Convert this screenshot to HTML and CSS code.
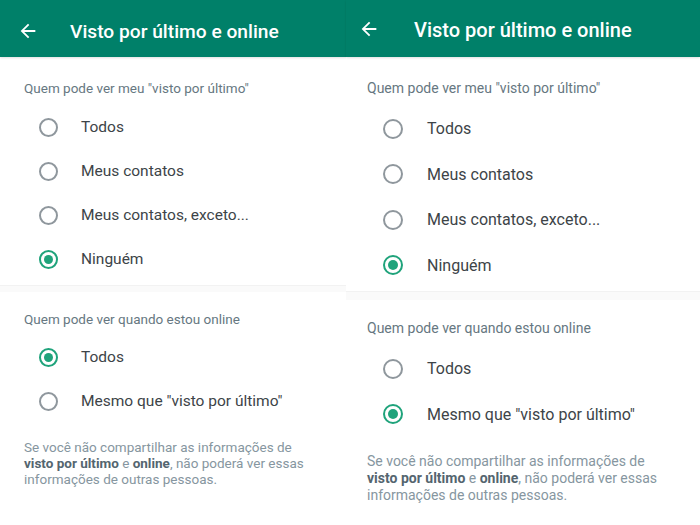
FILE: index.html
```html
<!DOCTYPE html>
<html lang="pt">
<head>
<meta charset="utf-8">
<link rel="stylesheet" href="styles.css">
</head>
<body>
<div class="page">
  <section class="panel left">
    <header class="bar">
      <svg class="back" viewBox="0 0 24 24"><path d="M20 11H7.83l5.59-5.59L12 4l-8 8 8 8 1.41-1.41L7.83 13H20v-2z" fill="#fff"/></svg>
      <h1 class="title">Visto por último e online</h1>
    </header>
    <div class="sub first">Quem pode ver meu "visto por último"</div>
    <div class="opt"><span class="radio"></span><span class="label">Todos</span></div>
    <div class="opt"><span class="radio"></span><span class="label">Meus contatos</span></div>
    <div class="opt"><span class="radio"></span><span class="label">Meus contatos, exceto...</span></div>
    <div class="opt"><span class="radio on"></span><span class="label">Ninguém</span></div>
    <div class="divider"></div>
    <div class="sub">Quem pode ver quando estou online</div>
    <div class="opt"><span class="radio on"></span><span class="label">Todos</span></div>
    <div class="opt"><span class="radio"></span><span class="label">Mesmo que "visto por último"</span></div>
    <div class="note">
      <span class="ln">Se você não compartilhar as informações de</span>
      <span class="ln"><b>visto por último</b> e <b>online</b><span>, não poderá ver essas</span></span>
      <span class="ln">informações de outras pessoas.</span>
    </div>
  </section>
  <section class="panel right">
    <header class="bar">
      <svg class="back" viewBox="0 0 24 24"><path d="M20 11H7.83l5.59-5.59L12 4l-8 8 8 8 1.41-1.41L7.83 13H20v-2z" fill="#fff"/></svg>
      <h1 class="title">Visto por último e online</h1>
    </header>
    <div class="sub first">Quem pode ver meu "visto por último"</div>
    <div class="opt"><span class="radio"></span><span class="label">Todos</span></div>
    <div class="opt"><span class="radio"></span><span class="label">Meus contatos</span></div>
    <div class="opt"><span class="radio"></span><span class="label">Meus contatos, exceto...</span></div>
    <div class="opt"><span class="radio on"></span><span class="label">Ninguém</span></div>
    <div class="divider"></div>
    <div class="sub">Quem pode ver quando estou online</div>
    <div class="opt"><span class="radio"></span><span class="label">Todos</span></div>
    <div class="opt"><span class="radio on"></span><span class="label">Mesmo que "visto por último"</span></div>
    <div class="note">
      <span class="ln">Se você não compartilhar as informações de</span>
      <span class="ln"><b>visto por último</b> e <b>online</b><span>, não poderá ver essas</span></span>
      <span class="ln">informações de outras pessoas.</span>
    </div>
  </section>
</div>
</body>
</html>
```
FILE: styles.css
```css
html, body {
  margin: 0;
  padding: 0;
  background: #fff;
}
body {
  font-family: Roboto, "Liberation Sans", sans-serif;
  width: 700px;
  height: 525px;
  overflow: hidden;
}
.page {
  display: flex;
  width: 700px;
  height: 525px;
}
.panel {
  display: flex;
  flex-direction: column;
  background: #fff;
}
.left { width: 346px; }
.right { width: 354px; }

.bar {
  height: 57px;
  box-sizing: border-box;
  background: #008069;
  display: flex;
  align-items: center;
  box-shadow: 0 1px 2px rgba(0,0,0,0.12);
  flex: none;
}
.back { width: 22px; height: 22px; flex: none; }
.title {
  margin: 0;
  color: #fff;
  font-weight: 500;
  white-space: nowrap;
}
.left .bar { padding-top: 5px; }
.right .bar { padding-top: 3px; }
.left .back { margin-left: 17px; margin-right: 31px; }
.left .title { font-size: 19.2px; }
.right .back { margin-left: 12px; margin-right: 34px; margin-top: -2px; }
.right .title { font-size: 20px; }

.sub {
  color: #667781;
  font-size: 13.5px;
  line-height: 16px;
}
.left .sub { padding-left: 24px; }
.right .sub { padding-left: 21px; font-size: 14px; line-height: 17px; }
.left .sub.first { margin-top: 23px; margin-bottom: 9px; }
.left .sub { margin-top: 19px; margin-bottom: 8px; }
.right .sub.first { margin-top: 23px; margin-bottom: 9px; }
.right .sub { margin-top: 20px; margin-bottom: 9px; }

.opt {
  display: flex;
  align-items: center;
}
.left .opt { height: 44px; padding-left: 39px; }
.right .opt { height: 45.5px; padding-left: 37px; }

.radio {
  box-sizing: border-box;
  width: 19px;
  height: 19px;
  border: 2px solid #8f979d;
  border-radius: 50%;
  flex: none;
  position: relative;
}
.right .radio { width: 20px; height: 20px; }
.radio.on { border-color: #1fa37b; }
.radio.on::after {
  content: "";
  position: absolute;
  left: 3px; top: 3px; right: 3px; bottom: 3px;
  border-radius: 50%;
  background: #1fa37b;
}
.label {
  color: #3d4448;
  white-space: nowrap;
}
.left .label { font-size: 15.5px; margin-left: 23px; }
.right .label { font-size: 16px; margin-left: 24px; }

.divider {
  height: 6px;
  background: #fafafa;
  border-top: 1px solid #f2f2f2;
  flex: none;
}
.left .divider { margin-top: 4px; }
.right .divider { margin-top: 3px; height: 8px; }

.note {
  display: flex;
  flex-direction: column;
  color: #8696a0;
  font-size: 13.5px;
  line-height: 16px;
}
.ln { white-space: nowrap; }
.note b { color: #54656f; font-weight: 700; }
.left .note { padding: 16px 20px 0 24px; }
.right .note { padding: 16px 20px 0 21px; font-size: 14px; line-height: 17px; }
```
